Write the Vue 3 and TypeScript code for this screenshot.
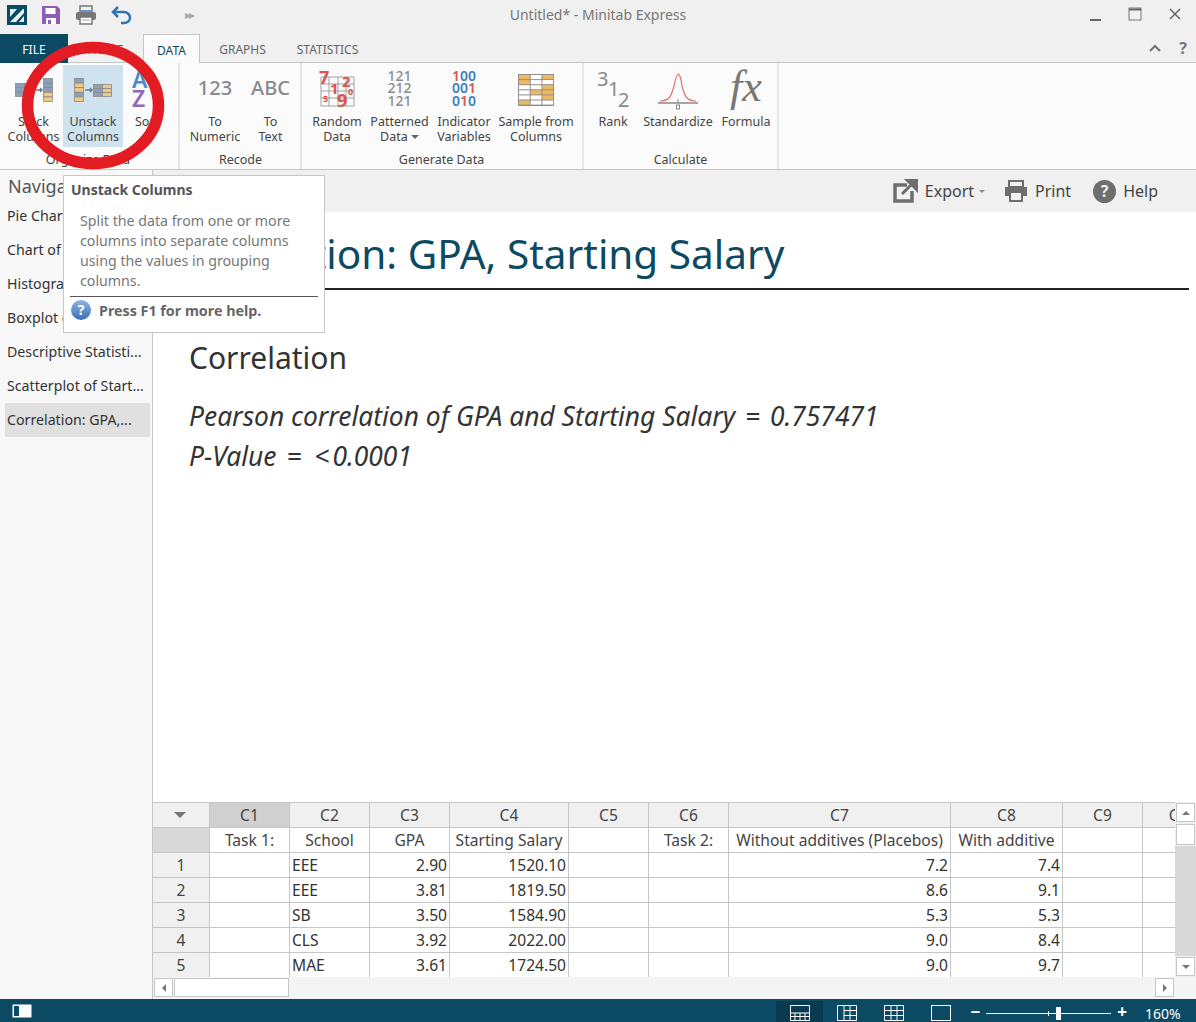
<template>
  <div class="app">
    <header class="titlebar">
      <div class="qat">
        <svg width="20" height="20" viewBox="0 0 20 20"><rect width="20" height="20" fill="#0c4a63" /><path d="M3 4h7L3 12zM16 4h1v4l-8 9H3zM17 11v6h-5z" fill="#e8f2f6" /></svg>
        <svg width="20" height="20" viewBox="0 0 20 20"><path d="M1 1h15l3 3v15H1z" fill="#8e5bb5" /><rect x="4.500" y="3" width="10" height="6" fill="#fff" /><rect x="5" y="13" width="10" height="6" fill="#fff" /><rect x="7" y="15" width="3" height="4" fill="#8e5bb5" /></svg>
        <svg width="22" height="20" viewBox="0 0 22 20"><rect x="5" y="1" width="12" height="6" fill="none" stroke="#777" stroke-width="1.500" /><rect x="1" y="7" width="20" height="8" rx="2" fill="#777" /><rect x="6" y="5" width="10" height="2" fill="#5b9bd5" /><rect x="5" y="12" width="12" height="7" fill="#fff" stroke="#777" stroke-width="1.500" /><path d="M7 15h8" stroke="#aaa" /></svg>
        <svg width="22" height="20" viewBox="0 0 22 20"><path d="M7 2 2 7l5 5M2 7h11a6 6 0 0 1 6 6 6 5 0 0 1-6 5H10" fill="none" stroke="#2f74b5" stroke-width="2.500" /></svg>
        <span class="more">▸▸</span>
      </div>
      <div class="app-title">Untitled* - Minitab Express</div>
      <div class="win">
        <svg width="14" height="14" viewBox="0 0 14 14"><path d="M2 13h11" stroke="#666" stroke-width="2" /></svg>
        <svg width="14" height="14" viewBox="0 0 14 14"><rect x="1" y="1" width="12" height="12" fill="none" stroke="#777" /><path d="M1 2.500h12" stroke="#666" stroke-width="2" /></svg>
        <svg width="14" height="14" viewBox="0 0 14 14"><path d="M2 2l10 10M12 2 2 12" stroke="#666" stroke-width="1.500" /></svg>
      </div>
    </header>

    <nav class="tabs">
      <div class="tab file">FILE</div>
      <div class="tab home">HOME</div>
      <div class="tab active">DATA</div>
      <div class="tab graphs">GRAPHS</div>
      <div class="tab stats">STATISTICS</div>
      <div class="tab-right">
        <svg width="12" height="8" viewBox="0 0 12 8"><path d="M1 7l5-5 5 5" fill="none" stroke="#777" stroke-width="2.200" /></svg>
        <span class="tab-help">?</span>
      </div>
    </nav>

    <section class="ribbon">
      <div class="group g1">
        <div class="btns">
          <div class="rbtn" style="width: 59px">
            <div class="ico">
              <svg width="38" height="24" viewBox="0 0 38 24">
                <g stroke="#8a8a8a" stroke-width="0.800">
                  <rect x="0.500" y="5.500" width="9" height="4.300" fill="#8c9fbb" /><rect x="0.500" y="9.800" width="9" height="4.300" fill="#8c9fbb" /><rect x="0.500" y="14.100" width="9" height="4.300" fill="#8c9fbb" />
                  <rect x="9.500" y="5.500" width="9" height="4.300" fill="#8c9fbb" /><rect x="9.500" y="9.800" width="9" height="4.300" fill="#8c9fbb" /><rect x="9.500" y="14.100" width="9" height="4.300" fill="#8c9fbb" />
                  <rect x="28.500" y="0.500" width="9" height="4.600" fill="#8c9fbb" /><rect x="28.500" y="5.100" width="9" height="4.600" fill="#8c9fbb" /><rect x="28.500" y="9.700" width="9" height="4.600" fill="#8c9fbb" /><rect x="28.500" y="14.300" width="9" height="4.600" fill="#f0c987" /><rect x="28.500" y="18.900" width="9" height="4.600" fill="#f0c987" />
                </g>
                <path d="M21 12h6M25 10l2 2-2 2" fill="none" stroke="#777" stroke-width="1.400" />
              </svg>
            </div>
            <span>Stack<br />Columns</span>
          </div>
          <div class="rbtn selected" style="width: 60px">
            <div class="ico">
              <svg width="38" height="24" viewBox="0 0 38 24">
                <g stroke="#8a8a8a" stroke-width="0.800">
                  <rect x="0.500" y="0.500" width="9" height="4.600" fill="#8c9fbb" /><rect x="0.500" y="5.100" width="9" height="4.600" fill="#f0c987" /><rect x="0.500" y="9.700" width="9" height="4.600" fill="#f0c987" /><rect x="0.500" y="14.300" width="9" height="4.600" fill="#8c9fbb" /><rect x="0.500" y="18.900" width="9" height="4.600" fill="#f0c987" />
                  <rect x="19.500" y="6.500" width="9" height="4" fill="#8c9fbb" /><rect x="19.500" y="10.500" width="9" height="4" fill="#8c9fbb" /><rect x="19.500" y="14.500" width="9" height="4" fill="#8c9fbb" />
                  <rect x="28.500" y="6.500" width="9" height="4" fill="#f0c987" /><rect x="28.500" y="10.500" width="9" height="4" fill="#f0c987" /><rect x="28.500" y="14.500" width="9" height="4" fill="#f0c987" />
                </g>
                <path d="M11 12h7M16 10l2 2-2 2" fill="none" stroke="#777" stroke-width="1.400" />
              </svg>
            </div>
            <span>Unstack<br />Columns</span>
          </div>
          <div class="rbtn" style="width: 48px">
            <div class="ico">
              <svg width="30" height="38" viewBox="0 0 30 38"><text x="0" y="17" class="az" fill="#4a8ccb">A</text><text x="0" y="36" class="az" fill="#9068b8">Z</text></svg>
            </div>
            <span>Sort<br />&nbsp;</span>
          </div>
        </div>
        <div class="glabel">Organize Data</div>
      </div>

      <div class="group g2">
        <div class="btns">
          <div class="rbtn" style="width: 56px">
            <div class="ico big-text">123</div>
            <span>To<br />Numeric</span>
          </div>
          <div class="rbtn" style="width: 55px">
            <div class="ico big-text">ABC</div>
            <span>To<br />Text</span>
          </div>
        </div>
        <div class="glabel">Recode</div>
      </div>

      <div class="group g3">
        <div class="btns">
          <div class="rbtn" style="width: 60px">
            <div class="ico">
              <svg width="38" height="38" viewBox="0 0 38 38">
                <path d="M3 6h33v29H3zM3 13h33M3 20h33M3 27h33M11 6v29M20 6v29M28 6v29" fill="none" stroke="#a0a0a0" />
                <g fill="#d9534f" font-family="Noto Sans, sans-serif" font-weight="700">
                  <text x="1" y="13" font-size="18">7</text><text x="12" y="23" font-size="15">1</text><text x="24" y="16" font-size="15">2</text><text x="30" y="24" font-size="9">0</text><text x="5" y="31" font-size="9">5</text><text x="19" y="36" font-size="18">9</text>
                </g>
              </svg>
            </div>
            <span>Random<br />Data</span>
          </div>
          <div class="rbtn" style="width: 65px">
            <div class="ico digits">
              <div>121</div>
              <div>212</div>
              <div>121</div>
            </div>
            <span>Patterned<br />Data <i class="caret"></i></span>
          </div>
          <div class="rbtn" style="width: 64px">
            <div class="ico digits colored">
              <div class="blue"><b class="red">1</b>00</div>
              <div class="blue">00<b class="red">1</b></div>
              <div class="blue">0<b class="red">1</b>0</div>
            </div>
            <span>Indicator<br />Variables</span>
          </div>
          <div class="rbtn" style="width: 80px">
            <div class="ico">
              <svg width="36" height="32" viewBox="0 0 36 32">
                <rect width="36" height="32" fill="#8f8f8f" />
                <g v-for="(row, r) in sampleCells" :key="r">
                  <rect
                    v-for="(on, c) in row"
                    :key="c"
                    :x="1 + c * 11.700"
                    :y="1 + r * 5.100"
                    width="10.700"
                    height="4.100"
                    :fill="on ? '#eeb95f' : '#fff'"
                  />
                </g>
              </svg>
            </div>
            <span>Sample from<br />Columns</span>
          </div>
        </div>
        <div class="glabel">Generate Data</div>
      </div>

      <div class="group g4">
        <div class="btns">
          <div class="rbtn" style="width: 46px">
            <div class="ico">
              <svg width="34" height="38" viewBox="0 0 34 38"><text x="1" y="15" class="rank">3</text><text x="12" y="25" class="rank">1</text><text x="22" y="36" class="rank">2</text></svg>
            </div>
            <span>Rank<br />&nbsp;</span>
          </div>
          <div class="rbtn" style="width: 76px; margin-left: 4px">
            <div class="ico">
              <svg width="42" height="40" viewBox="0 0 42 40"><path d="M3 31c8 0 11-3 14-15 2-9 3-12 4-12s3 3 4 12c3 12 6 15 14 15" fill="none" stroke="#d9746f" stroke-width="1.200" /><path d="M1 33h40" stroke="#888" stroke-width="1.500" /><path d="M21 29v4" stroke="#888" /><rect x="19.500" y="35" width="3" height="4" fill="none" stroke="#888" /></svg>
            </div>
            <span>Standardize<br />&nbsp;</span>
          </div>
          <div class="rbtn" style="width: 60px">
            <div class="ico fx">fx</div>
            <span>Formula<br />&nbsp;</span>
          </div>
        </div>
        <div class="glabel">Calculate</div>
      </div>
    </section>

    <main class="main">
      <aside class="nav">
        <div class="nav-title">Navigator</div>
        <ul class="nav-list">
          <li v-for="item in navItems" :key="item" :class="{ current: item.startsWith('Correlation') }">{{ item }}</li>
        </ul>
      </aside>

      <div class="report">
        <div class="report-bar">
          <div class="rb-item">
            <svg width="25" height="24" viewBox="0 0 25 24"><path d="M14 6H2v16h17V12" fill="none" stroke="#6e6e6e" stroke-width="3.500" /><path d="M9 15 20 4M14 1h10v10z" stroke="#6e6e6e" stroke-width="3" fill="#6e6e6e" /></svg>
            <span>Export</span><i class="caret small"></i>
          </div>
          <div class="rb-item">
            <svg width="24" height="22" viewBox="0 0 24 22"><rect x="5" y="1" width="14" height="6" fill="none" stroke="#6e6e6e" stroke-width="2" /><path d="M1 7h22v9h-4v-4H5v4H1z" fill="#6e6e6e" /><path d="M6 12h12v9H6z" fill="none" stroke="#6e6e6e" stroke-width="2" /></svg>
            <span>Print</span>
          </div>
          <div class="rb-item">
            <svg width="23" height="23" viewBox="0 0 23 23"><circle cx="11.500" cy="11.500" r="11.500" fill="#6e6e6e" /><text x="11.500" y="17" text-anchor="middle" class="help-q">?</text></svg>
            <span>Help</span>
          </div>
        </div>

        <div class="doc">
          <h1>Correlation: GPA, Starting Salary</h1>
          <h2>Correlation</h2>
          <p>Pearson correlation of GPA and Starting Salary <span class="op">=</span> 0.757471</p>
          <p>P-Value <span class="op">=</span> <span class="op">&lt;</span>0.0001</p>
        </div>

        <div class="sheet-wrap">
          <div class="sheet">
            <div class="grid">
              <div class="cell head corner"><i class="corner-arrow"></i></div>
              <div
                v-for="(c, i) in columns"
                :key="c.id"
                class="cell head"
                :class="{ picked: i === 0 }"
              >{{ c.id }}</div>

              <div class="cell rowhead blank"></div>
              <div v-for="c in columns" :key="c.id + 'n'" class="cell name">{{ c.name }}</div>

              <template v-for="(row, r) in rows" :key="r">
                <div class="cell rowhead">{{ r + 1 }}</div>
                <div
                  v-for="(v, i) in row"
                  :key="i"
                  class="cell"
                  :class="i === 1 ? 'txt' : 'num'"
                >{{ v }}</div>
              </template>
            </div>
            <div class="vscroll">
              <div class="sb-btn"><i class="up"></i></div>
              <div class="sb-thumb"></div>
              <div class="sb-track"></div>
              <div class="sb-btn"><i class="down"></i></div>
            </div>
          </div>
          <div class="hscroll">
            <div class="sb-btn h"><i class="left"></i></div>
            <div class="sb-thumb h"></div>
            <div class="sb-track h"></div>
            <div class="sb-btn h"><i class="right"></i></div>
          </div>
        </div>
      </div>
    </main>

    <footer class="status">
      <svg class="panel-ico" width="20" height="14" viewBox="0 0 20 14"><rect x="0.500" y="0.500" width="19" height="13" fill="#fff" /><rect x="2" y="2" width="5" height="10" fill="#0c4a63" /></svg>
      <div class="views">
        <div class="view on">
          <svg width="20" height="16" viewBox="0 0 20 16"><path d="M.5.500h19v15H.5zM.5 8h19M.5 11.500h19M5 8v7.500M10 8v7.500M15 8v7.500" fill="none" stroke="#fff" /></svg>
        </div>
        <div class="view">
          <svg width="20" height="16" viewBox="0 0 20 16"><path d="M.5.500h19v15H.5zM7 .5v15M13 .5v15M7 5.500h12.500M7 10.500h12.500" fill="none" stroke="#fff" /></svg>
        </div>
        <div class="view">
          <svg width="20" height="16" viewBox="0 0 20 16"><path d="M.5.500h19v15H.5zM7 .5v15M13 .5v15M.5 5.500h19M.5 10.500h19" fill="none" stroke="#fff" /></svg>
        </div>
        <div class="view">
          <svg width="20" height="16" viewBox="0 0 20 16"><rect x="0.500" y="0.500" width="19" height="15" fill="none" stroke="#fff" /></svg>
        </div>
      </div>
      <div class="zoom">
        <span class="z-sign">−</span>
        <div class="slider"><i class="tick"></i><i class="thumb"></i></div>
        <span class="z-sign">+</span>
      </div>
      <div class="pct">160%</div>
    </footer>

    <div class="tooltip">
      <div class="tt-title">Unstack Columns</div>
      <div class="tt-body">Split the data from one or more columns into separate columns using the values in grouping columns.</div>
      <div class="tt-help">
        <svg width="20" height="20" viewBox="0 0 20 20"><defs><linearGradient id="tth" x1="0" y1="0" x2="0" y2="1"><stop offset="0" stop-color="#8db4e2" /><stop offset="1" stop-color="#3a6fb5" /></linearGradient></defs><circle cx="10" cy="10" r="10" fill="url(#tth)" /><text x="10" y="15" text-anchor="middle" class="help-q small">?</text></svg>
        <span>Press F1 for more help.</span>
      </div>
    </div>

    <svg class="circle" width="146" height="131" viewBox="0 0 146 131"><ellipse cx="73" cy="65.500" rx="65.500" ry="58" fill="none" stroke="#e31b23" stroke-width="11.500" /></svg>
  </div>
</template>

<script setup lang="ts">
const sampleCells = [
  [1, 0, 1],
  [1, 0, 0],
  [0, 0, 1],
  [0, 1, 1],
  [0, 0, 1],
  [1, 0, 0],
]

const navItems = [
  'Pie Chart of School',
  'Chart of School',
  'Histogram of GPA',
  'Boxplot of GPA',
  'Descriptive Statisti...',
  'Scatterplot of Start...',
  'Correlation: GPA,...',
]

const columns = [
  { id: 'C1', name: 'Task 1:' },
  { id: 'C2', name: 'School' },
  { id: 'C3', name: 'GPA' },
  { id: 'C4', name: 'Starting Salary' },
  { id: 'C5', name: '' },
  { id: 'C6', name: 'Task 2:' },
  { id: 'C7', name: 'Without additives (Placebos)' },
  { id: 'C8', name: 'With additive' },
  { id: 'C9', name: '' },
  { id: 'C10', name: '' },
]

const rows = [
  ['', 'EEE', '2.90', '1520.10', '', '', '7.2', '7.4', '', ''],
  ['', 'EEE', '3.81', '1819.50', '', '', '8.6', '9.1', '', ''],
  ['', 'SB', '3.50', '1584.90', '', '', '5.3', '5.3', '', ''],
  ['', 'CLS', '3.92', '2022.00', '', '', '9.0', '8.4', '', ''],
  ['', 'MAE', '3.61', '1724.50', '', '', '9.0', '9.7', '', ''],
]
</script>

<style scoped>
.app {
  position: relative;
  width: 1196px;
  height: 1022px;
  overflow: hidden;
  display: flex;
  flex-direction: column;
  background: #fff;
  color: #444;
  font-family: "Noto Sans", "Open Sans", sans-serif;
  font-size: 12.500px;
}

.titlebar {
  height: 34px;
  flex: none;
  background: #f0f0f0;
  position: relative;
  display: flex;
  align-items: center;
  justify-content: space-between;
}
.qat {
  display: flex;
  align-items: center;
  gap: 14px;
  padding-left: 7px;
  margin-top: -5px;
}
.more {
  color: #aaa;
  font-size: 12px;
  letter-spacing: -2px;
  margin-left: 38px;
}
.app-title {
  position: absolute;
  left: 0;
  right: 0;
  top: 5px;
  text-align: center;
  font-size: 14px;
  color: #777;
}
.win {
  display: flex;
  gap: 26px;
  padding-right: 14px;
  margin-top: -6px;
}

.tabs {
  height: 29px;
  flex: none;
  background: #f0f0f0;
  border-bottom: 1px solid #c6c6c6;
  box-sizing: border-box;
  display: flex;
  align-items: flex-end;
}
.tab {
  height: 28px;
  line-height: 31px;
  text-align: center;
  font-size: 12px;
  color: #666;
}
.tab.file {
  width: 68px;
  height: 29px;
  margin-bottom: -1px;
  background: #0c4a63;
  color: #fff;
}
.tab.home {
  width: 75px;
}
.tab.active {
  width: 57px;
  height: 29px;
  margin-bottom: -1px;
  box-sizing: border-box;
  background: #fbfbfb;
  border: 1px solid #c6c6c6;
  border-bottom: none;
  color: #0c4a63;
}
.tab.graphs {
  width: 85px;
}
.tab.stats {
  width: 85px;
}
.tab-right {
  margin-left: auto;
  display: flex;
  align-items: center;
  gap: 18px;
  padding: 0 9px 5px 0;
}
.tab-help {
  font-size: 16px;
  font-weight: 700;
  color: #777;
  line-height: 18px;
}

.ribbon {
  height: 107px;
  flex: none;
  background: #fbfbfb;
  border-bottom: 1px solid #c6c6c6;
  box-sizing: border-box;
  display: flex;
}
.group {
  box-sizing: border-box;
  border-right: 2px solid #e6e6e6;
  display: flex;
  flex-direction: column;
  padding-top: 2px;
}
.g1 {
  width: 180px;
  padding-left: 4px;
}
.g2 {
  width: 122px;
  padding-left: 7px;
}
.g3 {
  width: 282px;
  padding-left: 5px;
}
.g4 {
  width: 195px;
  padding-left: 6px;
}
.btns {
  display: flex;
  height: 82px;
}
.rbtn {
  flex: none;
  height: 82px;
  box-sizing: border-box;
  text-align: center;
  line-height: 15px;
  color: #444;
  white-space: nowrap;
}
.rbtn.selected {
  background: #cfe3ee;
}
.ico {
  height: 49px;
  display: flex;
  flex-direction: column;
  align-items: center;
  justify-content: center;
}
.glabel {
  text-align: center;
  margin-top: 5px;
  line-height: 16px;
  color: #444;
  padding-right: 6px;
}
.big-text {
  font-size: 20px;
  font-weight: 500;
  color: #8a8a8a;
  height: 45px;
  padding-bottom: 4px;
}
.digits {
  font-size: 14px;
  line-height: 12.500px;
  color: #8a8a8a;
  font-weight: 500;
  padding-bottom: 2px;
  height: 47px;
}
.digits.colored {
  font-weight: 600;
}
.digits .red,
.digits b.red {
  color: #d9534f;
}
.digits .blue {
  color: #3f7fbd;
}
.digits b {
  font-weight: 600;
}
.az {
  font-size: 23px;
  font-weight: 600;
}
.rank {
  font-size: 20px;
  fill: #8a8a8a;
}
.fx {
  font-family: "Liberation Serif", serif;
  font-style: italic;
  font-size: 44px;
  color: #777;
  padding-bottom: 6px;
  height: 43px;
}
.caret {
  display: inline-block;
  width: 0;
  height: 0;
  border-left: 4px solid transparent;
  border-right: 4px solid transparent;
  border-top: 4px solid #666;
  vertical-align: 2px;
}
.caret.small {
  border-left-width: 3px;
  border-right-width: 3px;
  border-top-width: 3px;
  margin: 0 -3px 0 -2px;
  vertical-align: 0;
  border-top-color: #888;
}

.main {
  flex: 1;
  min-height: 0;
  display: flex;
}
.nav {
  width: 153px;
  flex: none;
  box-sizing: border-box;
  border-right: 1px solid #c6c6c6;
  background: #f8f8f8;
}
.nav-title {
  height: 29px;
  padding: 4px 0 0 8px;
  box-sizing: border-box;
  font-size: 18px;
  color: #555;
}
.nav-list {
  list-style: none;
  margin: 0;
  padding: 0 2px 0 5px;
}
.nav-list li {
  height: 34px;
  line-height: 33px;
  padding-left: 2px;
  font-size: 14.200px;
  color: #333;
  white-space: nowrap;
  overflow: hidden;
}
.nav-list li.current {
  background: #e0e0e0;
}

.report {
  flex: 1;
  min-width: 0;
  display: flex;
  flex-direction: column;
}
.report-bar {
  height: 42px;
  flex: none;
  background: #f0f0f0;
  display: flex;
  align-items: center;
  justify-content: flex-end;
  gap: 22px;
  padding: 0 38px 0 0;
  box-sizing: border-box;
  font-size: 16px;
  color: #444;
}
.rb-item {
  display: flex;
  align-items: center;
  gap: 7px;
}
.help-q {
  font-size: 16px;
  font-weight: 700;
  fill: #f0f0f0;
}
.help-q.small {
  font-size: 14px;
  fill: #fff;
}

.doc {
  flex: 1;
  min-height: 0;
  padding-top: 13px;
  color: #333;
}
.doc h1 {
  margin: 0 7px 0 17px;
  padding: 0 0 5px 3px;
  border-bottom: 2px solid #222;
  font-size: 40.500px;
  line-height: 58px;
  font-weight: 400;
  color: #0c4a63;
  white-space: nowrap;
}
.doc h2 {
  margin: 46px 0 16px 36px;
  font-size: 30px;
  line-height: 44px;
  font-weight: 400;
  color: #333;
}
.doc p {
  margin: 0 0 0 36px;
  font-size: 26.400px;
  line-height: 40px;
  font-style: italic;
  color: #333;
}
.op {
  margin: 0 3px;
}

.sheet-wrap {
  flex: none;
  background: #f4f4f4;
}
.sheet {
  display: flex;
  height: 175px;
  overflow: hidden;
}
.grid {
  flex: 1;
  min-width: 0;
  display: grid;
  grid-template-columns: 57px 80px 80px 80px 119px 80px 80px 222px 112px 80px 80px;
  grid-auto-rows: 25px;
  overflow: hidden;
  border-top: 1px solid #c6c6c6;
  margin-top: 0;
  font-size: 15.600px;
  background: #fff;
  height: 175px;
  box-sizing: border-box;
}
.cell {
  box-sizing: border-box;
  border-right: 1px solid #c6c6c6;
  border-bottom: 1px solid #c6c6c6;
  color: #333;
  line-height: 24px;
  white-space: nowrap;
  overflow: hidden;
}
.head {
  background: #f0f0f0;
  text-align: center;
  color: #444;
}
.head.picked {
  background: #d0d0d0;
}
.corner {
  display: flex;
  align-items: center;
  justify-content: center;
  padding-right: 3px;
}
.corner-arrow {
  width: 0;
  height: 0;
  border-left: 6px solid transparent;
  border-right: 6px solid transparent;
  border-top: 6px solid #777;
}
.rowhead {
  background: #f0f0f0;
  text-align: center;
  color: #444;
}
.rowhead.blank {
  background: #d8d8d8;
}
.name {
  text-align: center;
  color: #444;
}
.txt {
  padding-left: 2px;
}
.num {
  text-align: right;
  padding-right: 2px;
}

.vscroll {
  width: 21px;
  flex: none;
  display: flex;
  flex-direction: column;
  background: #f0f0f0;
}
.sb-btn {
  width: 19px;
  height: 19px;
  margin: 1px;
  flex: none;
  box-sizing: border-box;
  background: #fff;
  border: 1px solid #c6c6c6;
  display: flex;
  align-items: center;
  justify-content: center;
}
.sb-thumb {
  height: 21px;
  margin: 1px;
  box-sizing: border-box;
  background: #fff;
  border: 1px solid #c6c6c6;
}
.sb-track {
  flex: 1;
  background: #d8d8d8;
}
.sb-btn i {
  width: 0;
  height: 0;
  border: 4px solid transparent;
}
.sb-btn i.up {
  border-bottom-color: #777;
  border-top: none;
}
.sb-btn i.down {
  border-top-color: #777;
  border-bottom: none;
}
.sb-btn i.left {
  border-right-color: #777;
  border-left: none;
}
.sb-btn i.right {
  border-left-color: #777;
  border-right: none;
}

.hscroll {
  height: 22px;
  display: flex;
  padding-right: 21px;
  background: #f4f4f4;
  box-sizing: border-box;
}
.sb-thumb.h {
  width: 115px;
  height: 19px;
  margin: 1px 1px 1px 0;
  flex: none;
}
.sb-track.h {
  background: transparent;
  flex: 1;
}

.status {
  height: 23px;
  flex: none;
  background: #0c4a63;
  display: flex;
  align-items: center;
  color: #fff;
}
.panel-ico {
  margin-left: 12px;
}
.views {
  margin-left: auto;
  display: flex;
  height: 23px;
}
.view {
  width: 47px;
  display: flex;
  align-items: center;
  justify-content: center;
  padding-top: 5px;
  box-sizing: border-box;
}
.view.on {
  background: #0a3a4f;
  margin-top: 2px;
  padding-top: 3px;
}
.zoom {
  display: flex;
  align-items: center;
  gap: 6px;
  margin-left: 6px;
}
.z-sign {
  font-size: 17px;
  font-weight: 700;
  line-height: 20px;
  padding-top: 3px;
}
.slider {
  position: relative;
  width: 125px;
  height: 1px;
  background: #fff;
  margin-top: 5px;
}
.tick {
  position: absolute;
  left: 62px;
  top: -2px;
  width: 1px;
  height: 5px;
  background: #fff;
}
.thumb {
  position: absolute;
  left: 70px;
  top: -6px;
  width: 5px;
  height: 13px;
  background: #fff;
}
.pct {
  width: 51px;
  margin-left: 18px;
  font-size: 14px;
  padding-top: 6px;
}

.tooltip {
  position: absolute;
  left: 63px;
  top: 175px;
  width: 262px;
  height: 158px;
  box-sizing: border-box;
  background: #fff;
  border: 1px solid #c6c6c6;
  color: #666;
  font-size: 14px;
}
.tt-title {
  font-weight: 700;
  padding: 4px 0 0 7px;
  line-height: 20px;
  color: #555;
}
.tt-body {
  margin: 11px 7px 5px 16px;
  font-size: 14.200px;
  line-height: 20px;
  height: 80px;
  color: #777;
}
.tt-help {
  margin: 0 6px;
  border-top: 1px solid #555;
  padding: 3px 0 0 1px;
  display: flex;
  align-items: center;
  gap: 8px;
  font-size: 14.300px;
  font-weight: 700;
  color: #666;
}
.circle {
  position: absolute;
  left: 20px;
  top: 40px;
}
</style>
